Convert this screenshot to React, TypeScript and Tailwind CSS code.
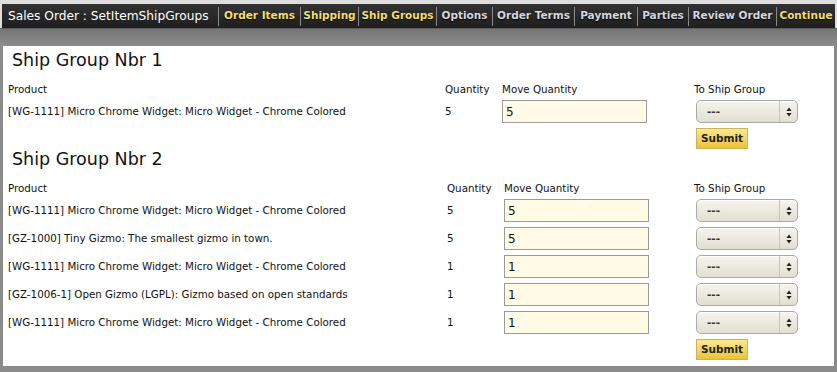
const NAV = [
  { label: "Order Items", hot: true, w: "w-[82px]" },
  { label: "Shipping", hot: true, w: "w-[58px]" },
  { label: "Ship Groups", hot: true, w: "w-[78px]" },
  { label: "Options", hot: false, w: "w-[56px]" },
  { label: "Order Terms", hot: false, w: "w-[82px]" },
  { label: "Payment", hot: false, w: "w-[63px]" },
  { label: "Parties", hot: false, w: "w-[51px]" },
  { label: "Review Order", hot: false, w: "w-[88px]" },
  { label: "Continue", hot: true, w: "w-[59px]" },
];

type Line = { product: string; qty: string };

const GROUP_1: Line[] = [{ product: "[WG-1111] Micro Chrome Widget: Micro Widget - Chrome Colored", qty: "5" }];

const GROUP_2: Line[] = [
  { product: "[WG-1111] Micro Chrome Widget: Micro Widget - Chrome Colored", qty: "5" },
  { product: "[GZ-1000] Tiny Gizmo: The smallest gizmo in town.", qty: "5" },
  { product: "[WG-1111] Micro Chrome Widget: Micro Widget - Chrome Colored", qty: "1" },
  { product: "[GZ-1006-1] Open Gizmo (LGPL): Gizmo based on open standards", qty: "1" },
  { product: "[WG-1111] Micro Chrome Widget: Micro Widget - Chrome Colored", qty: "1" },
];

function ShipSelect() {
  return (
    <div className="flex h-[23px] w-[102px] items-center rounded-[5px] border border-[#a9a9a9] bg-gradient-to-b from-[#f6f4ec] to-[#e2dfd2] shadow-[inset_0_1px_0_#fff]">
      <span className="flex-1 pl-[10px] text-[10.5px] font-bold text-[#333]">---</span>
      <span className="flex h-full w-[18px] items-center justify-center border-l border-[#c8c5b8]">
        <svg width="6" height="10" viewBox="0 0 6 10">
          <path d="M3 0.5 L5.6 4 H0.4 Z M3 9.5 L5.6 6 H0.4 Z" fill="#222" />
        </svg>
      </span>
    </div>
  );
}

function SubmitButton() {
  return (
    <button className="h-[21px] w-[52px] border border-[#c9b264] bg-gradient-to-b from-[#fbe98a] to-[#eac42c] text-[10.5px] font-bold text-[#222]">
      Submit
    </button>
  );
}

function ShipGroup({ nbr, lines, cols }: { nbr: number; lines: Line[]; cols: string }) {
  return (
    <section className="flex flex-col">
      <h2 className="pl-[9px] text-[17.5px] leading-[20px] text-[#111]">Ship Group Nbr {nbr}</h2>
      <div className={`mt-[14px] grid ${cols} items-center gap-y-[5px] pl-[5px] text-[10.3px] text-[#111]`}>
        <div className="leading-[11px]">Product</div>
        <div className="leading-[11px]">Quantity</div>
        <div className="leading-[11px]">Move Quantity</div>
        <div className="leading-[11px]">To Ship Group</div>
        {lines.map((l, i) => (
          <div key={i} className="contents">
            <div className="whitespace-nowrap">{l.product}</div>
            <div>{l.qty}</div>
            <div>
              <div className="flex h-[23px] w-[145px] items-center border border-[#9a9a9a] bg-[#fffbe6] pl-[3px] text-[12px] text-[#111]">
                {l.qty}
              </div>
            </div>
            <div className="pl-[2px]">
              <ShipSelect />
            </div>
          </div>
        ))}
        <div />
        <div />
        <div />
        <div className="pl-[2px]">
          <SubmitButton />
        </div>
      </div>
    </section>
  );
}

export default function App() {
  return (
    <div className="flex h-[372px] w-[837px] flex-col bg-[#8b8b8b] font-['DejaVu_Sans',sans-serif]">
      <div className="bg-[#dedede] px-[2px] pt-[4px]">
        <nav className="flex h-[24px] items-center whitespace-nowrap bg-gradient-to-b from-[#333] to-[#1e1e1e] pl-[6px]">
          <span className="w-[210px] text-[12.2px] text-white">Sales Order : SetItemShipGroups</span>
          {NAV.map((n) => (
            <span key={n.label} className={`flex h-[19px] ${n.w} items-center justify-center border-l border-[#8a8a8a]`}>
              <span
                className={`text-[10.5px] font-bold [text-shadow:0_1px_1px_#000] ${n.hot ? "text-[#f3de6e]" : "text-[#d6d6de]"}`}
              >
                {n.label}
              </span>
            </span>
          ))}
        </nav>
      </div>
      <div className="h-[18px] border-t border-[#5c5c5c] bg-gradient-to-b from-[#767676] to-[#8d8d8d]" />
      <main className="mx-[3px] flex h-[320px] flex-col bg-white pt-[4px]">
        <ShipGroup nbr={1} lines={GROUP_1} cols="grid-cols-[437px_57px_192px_1fr]" />
        <ShipGroup nbr={2} lines={GROUP_2} cols="grid-cols-[439px_57px_190px_1fr]" />
      </main>
    </div>
  );
}
